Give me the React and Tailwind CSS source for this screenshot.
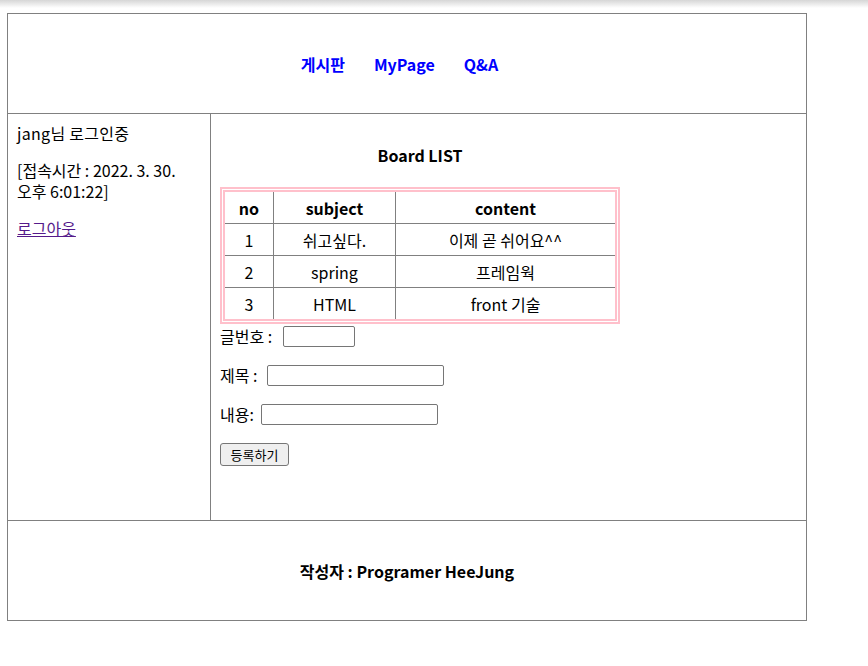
import React from 'react';

const rows = [
  { no: 1, subject: '쉬고싶다.', content: '이제 곧 쉬어요^^' },
  { no: 2, subject: 'spring', content: '프레임웍' },
  { no: 3, subject: 'HTML', content: 'front 기술' },
];

function BoardTable() {
  return (
    <div className="w-[400px]">
      <div className="mt-[21px] mb-[22px] text-center font-bold leading-[20px]">Board LIST</div>
      <div className="border-[5px] border-double border-[#ffc0cb]">
        <div className="grid grid-cols-[48px_121px_219px] gap-px bg-[#808080]">
          <div className="bg-white h-[31px] flex items-center justify-center font-bold">no</div>
          <div className="bg-white h-[31px] flex items-center justify-center font-bold">subject</div>
          <div className="bg-white h-[31px] flex items-center justify-center font-bold">content</div>
          {rows.map((r) => (
            <React.Fragment key={r.no}>
              <div className="bg-white h-[31px] flex items-center justify-center">{r.no}</div>
              <div className="bg-white h-[31px] flex items-center justify-center">{r.subject}</div>
              <div className="bg-white h-[31px] flex items-center justify-center">{r.content}</div>
            </React.Fragment>
          ))}
        </div>
      </div>
    </div>
  );
}

function WriteForm() {
  const input = 'h-[21px] border border-[#767676] rounded-[2px] bg-white';
  return (
    <form className="leading-[23px]">
      <p className="flex items-center h-[23px] mt-[1px]">
        <span className="w-[63px]">글번호 :</span>
        <input className={`${input} w-[72px]`} />
      </p>
      <p className="flex items-center h-[23px] mt-[16px]">
        <span className="w-[47px]">제목 :</span>
        <input className={`${input} w-[177px]`} />
      </p>
      <p className="flex items-center h-[23px] mt-[16px]">
        <span className="w-[41px]">내용:</span>
        <input className={`${input} w-[177px]`} />
      </p>
      <p className="mt-[16px]">
        <button
          type="button"
          className="h-[23px] w-[69px] text-[13px] leading-[21px] bg-[#efefef] border border-[#767676] rounded-[3px]"
        >
          등록하기
        </button>
      </p>
    </form>
  );
}

export default function App() {
  return (
    <div className="min-h-[666px] bg-white text-black text-[16px] font-['Noto_Sans_CJK_KR','Noto_Sans',sans-serif]">
      <div className="h-[8px] bg-gradient-to-b from-[#d6d6d6] to-white" />
      <div className="ml-[7px] mt-[5px] w-[800px] border border-[#808080]">
        {/* header */}
        <div className="h-[100px] flex items-center justify-center gap-[29px] pr-[15px] font-bold text-[#0000ff] border-b border-[#808080]">
          <a href="#">게시판</a>
          <a href="#">MyPage</a>
          <a href="#">Q&amp;A</a>
        </div>

        {/* body */}
        <div className="flex h-[407px] border-b border-[#808080]">
          <div className="w-[203px] border-r border-[#808080] pt-[9px] px-[9px] leading-[21px] break-keep">
            <p className="tracking-[0.3px]">jang님 로그인중</p>
            <p className="mt-[16px]">[접속시간 : 2022. 3. 30. 오후 6:01:22]</p>
            <p className="mt-[16px]">
              <a href="#" className="text-[#551a8b] underline">로그아웃</a>
            </p>
          </div>
          <div className="flex-1 pt-[10px] pl-[9px]">
            <BoardTable />
            <WriteForm />
          </div>
        </div>

        {/* footer */}
        <div className="h-[99px] flex items-center justify-center font-bold">
          작성자 : Programer HeeJung
        </div>
      </div>
    </div>
  );
}
